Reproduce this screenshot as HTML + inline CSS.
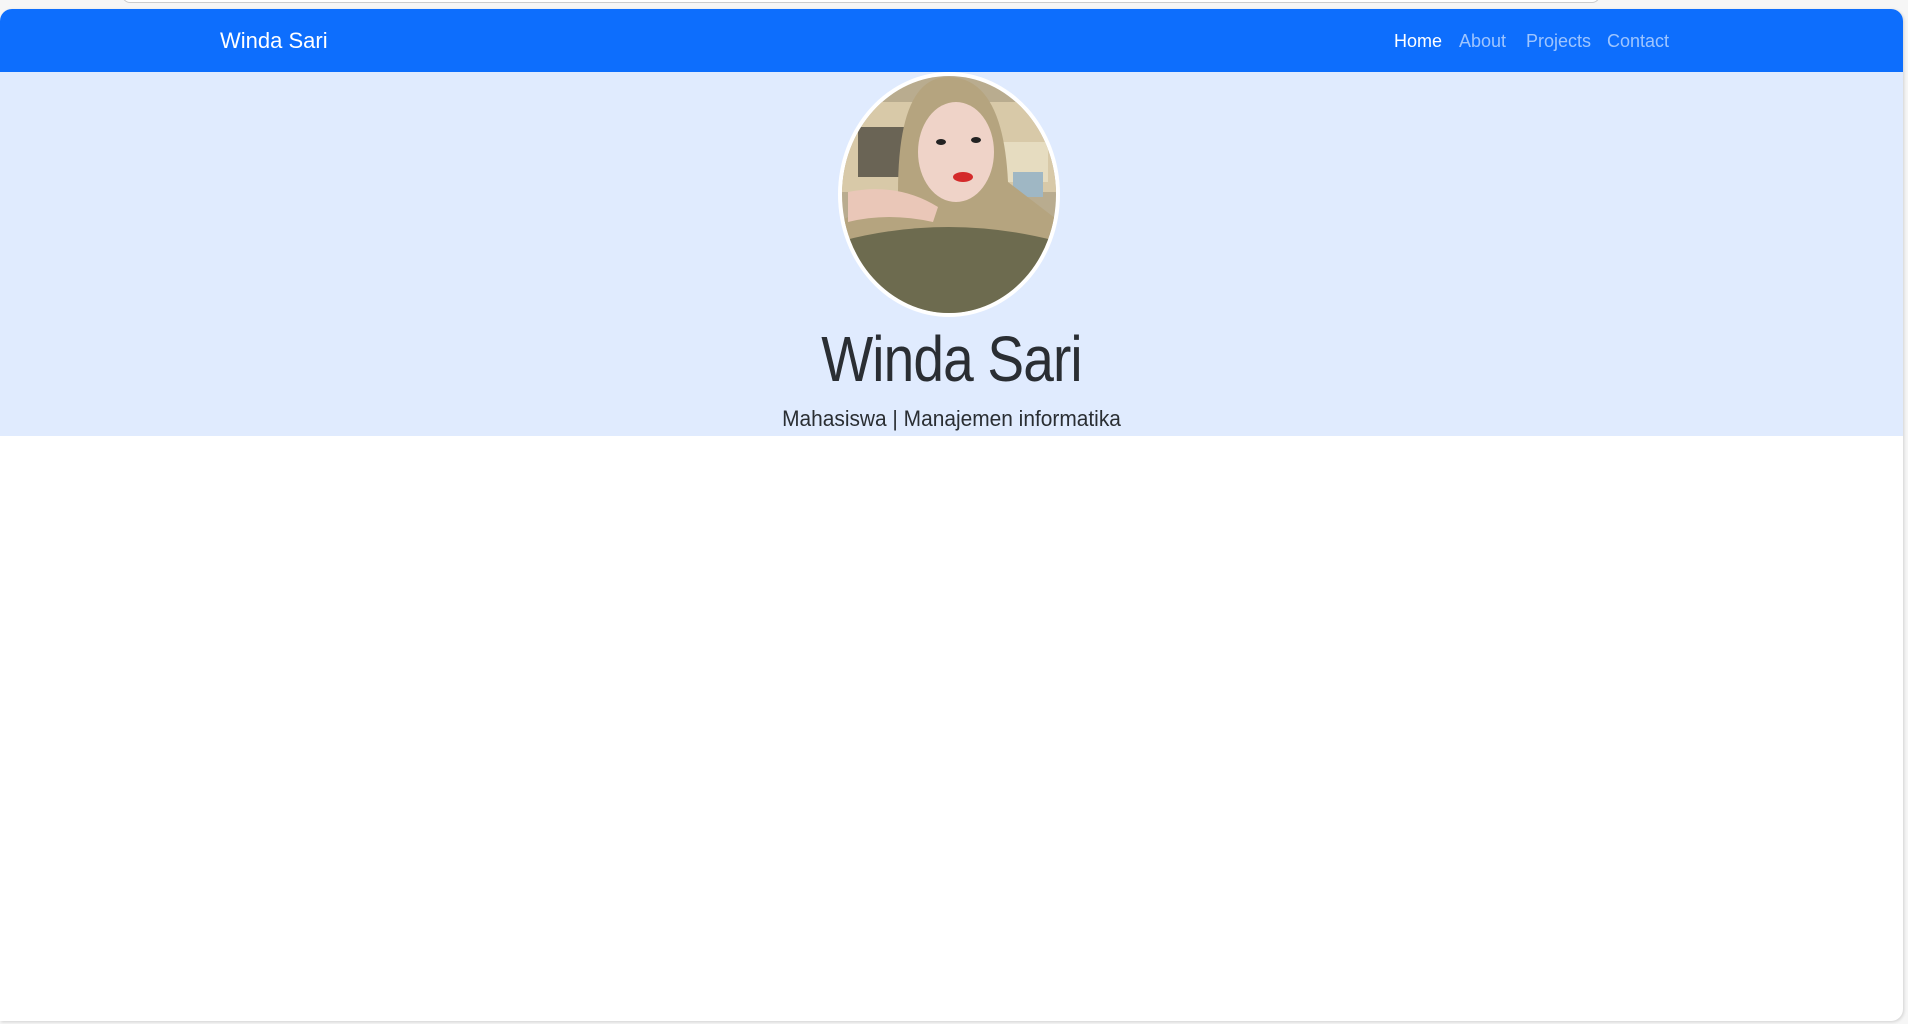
<!DOCTYPE html>
<html><head><meta charset="utf-8"><style>
*{margin:0;padding:0;box-sizing:border-box}
html,body{width:1908px;height:1024px;overflow:hidden;background:#f6f6f6;font-family:"Liberation Sans","DejaVu Sans",sans-serif}
.topbar{position:absolute;left:122px;top:-10px;width:1478px;height:13px;border:1px solid #ccc;border-radius:0 0 8px 8px;background:#fff}
.card{position:absolute;left:0;top:9px;width:1903px;height:1012px;background:#fff;border-radius:12px 12px 12px 0;box-shadow:1px 1px 3px rgba(0,0,0,.15);overflow:hidden}
.nav{position:absolute;left:0;top:0;width:100%;height:63px;background:#0d6efd}
.brand{position:absolute;left:220px;top:19px;color:#fff;font-size:22px}
.nl{position:absolute;top:22px;font-size:18px;color:rgba(255,255,255,.6)}
.hero{position:absolute;left:0;top:63px;width:100%;height:364px;background:#e0ebfe}
.av{position:absolute;left:838px;top:63px;width:222px;height:245px}
h1{position:absolute;left:0;width:100%;top:313px;text-align:center;font-weight:300;font-size:64px;color:#2a2e33;letter-spacing:-1px;transform:scaleX(0.86)}
.sub{position:absolute;left:0;width:100%;top:397px;text-align:center;font-size:22px;font-weight:300;color:#2a2e33;transform:scaleX(0.95)}
</style></head><body>
<div class="topbar"></div>
<div class="card">
 <div class="nav">
  <div class="brand">Winda Sari</div>
  <div class="nl" style="left:1394px;color:#fff">Home</div>
  <div class="nl" style="left:1459px">About</div>
  <div class="nl" style="left:1526px">Projects</div>
  <div class="nl" style="left:1607px">Contact</div>
 </div>
 <div class="hero"></div>
 <svg class="av" viewBox="0 0 222 245">
  <defs><clipPath id="c"><ellipse cx="111" cy="122.5" rx="107" ry="118.5"/></clipPath></defs>
  <ellipse cx="111" cy="122.5" rx="111" ry="122.5" fill="#fff"/>
  <g clip-path="url(#c)">
   <rect width="222" height="245" fill="#b9ac8f"/>
   <rect x="0" y="30" width="222" height="90" fill="#d8c9a8"/>
   <rect x="20" y="55" width="50" height="50" fill="#6a6455"/>
   <rect x="160" y="70" width="50" height="40" fill="#e6dcc0"/>
   <rect x="175" y="100" width="30" height="25" fill="#9fb7c4"/>
   <path d="M60 120 Q60 5 110 5 Q165 5 170 110 L222 150 L222 180 L0 180 L0 150Z" fill="#b5a47f"/>
   <ellipse cx="118" cy="80" rx="38" ry="50" fill="#efd3c8"/>
   <ellipse cx="125" cy="105" rx="10" ry="5" fill="#d42a2a"/>
   <ellipse cx="103" cy="70" rx="5" ry="3" fill="#222"/><ellipse cx="138" cy="68" rx="5" ry="3" fill="#222"/>
   <path d="M0 170 Q110 140 222 170 L222 245 L0 245Z" fill="#6d6b4f"/>
   <path d="M10 120 Q60 110 100 135 L95 150 Q50 140 10 150Z" fill="#eac7b8"/>
  </g>
 </svg>
 <h1>Winda Sari</h1>
 <div class="sub">Mahasiswa | Manajemen informatika</div>
</div>
</body></html>
